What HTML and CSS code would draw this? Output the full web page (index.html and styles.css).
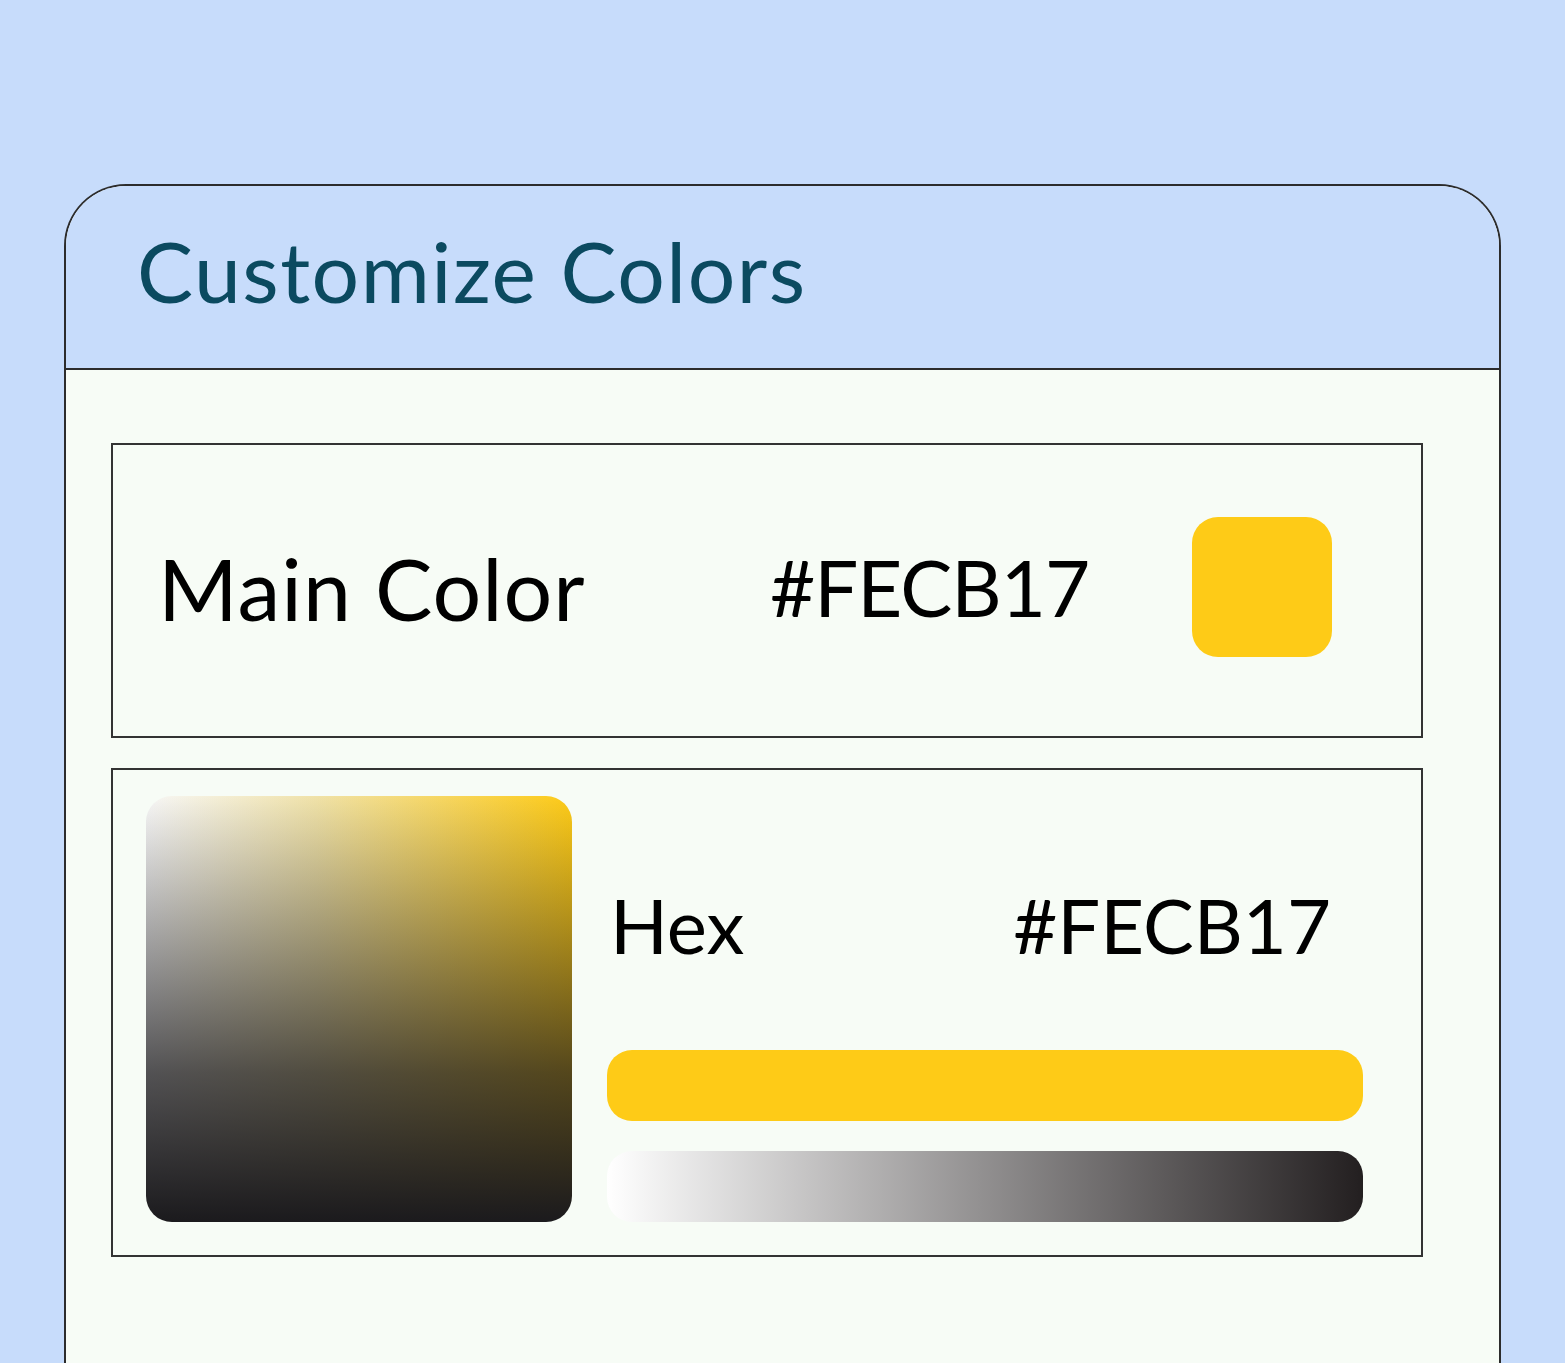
FILE: index.html
```html
<!DOCTYPE html>
<html>
<head>
<meta charset="utf-8">
<title>Customize Colors</title>
<link rel="stylesheet" href="styles.css">
</head>
<body>
<div class="page">
  <section class="card">
    <header class="card-head">
      <h1 class="title">Customize Colors</h1>
    </header>
    <div class="card-body">
      <div class="box main-row">
        <span class="label">Main Color</span>
        <span class="hex">#FECB17</span>
        <span class="swatch"></span>
      </div>
      <div class="box picker">
        <div class="sv-square"></div>
        <div class="picker-side">
          <div class="hex-row">
            <span class="hex-label">Hex</span>
            <span class="hex-value">#FECB17</span>
          </div>
          <div class="bar bar-color"></div>
          <div class="bar bar-gray"></div>
        </div>
      </div>
    </div>
  </section>
</div>
</body>
</html>
```

FILE: styles.css
```css
html, body {
  margin: 0;
  padding: 0;
  background: #c7dcfb;
  height: 1363px;
  overflow: hidden;
}

.page {
  padding: 184px 0 0 64px;
  font-family: Lato, "Noto Sans", sans-serif;
  color: #000;
}

.card {
  width: 1433px;
  height: 1179px;
  border: 2px solid #2c2c2c;
  border-bottom: none;
  border-radius: 62px 62px 0 0;
  overflow: hidden;
  background: #f7fcf6;
}

.card-head {
  height: 182px;
  background: #c7dcfb;
  border-bottom: 2px solid #2c2c2c;
  display: flex;
  align-items: center;
  padding-left: 71px;
}

.title {
  margin: 0;
  font-weight: 400;
  font-size: 84px;
  letter-spacing: 1.5px;
  color: #0b4a60;
  line-height: 1;
  position: relative;
  top: -6px;
}

.card-body {
  padding: 73px 0 0 45px;
  display: flex;
  flex-direction: column;
  gap: 30px;
}

.box {
  width: 1308px;
  border: 2px solid #333;
  box-sizing: content-box;
}

.main-row {
  height: 291px;
  display: flex;
  align-items: center;
}

.label {
  width: 612px;
  padding-left: 45px;
  font-size: 86px;
  letter-spacing: 1px;
  line-height: 1;
  margin-top: -6px;
}

.hex {
  width: 422px;
  font-size: 78px;
  letter-spacing: -1px;
  line-height: 1;
  margin-top: -8px;
}

.swatch {
  width: 140px;
  height: 140px;
  border-radius: 26px;
  background: #fecb17;
  margin-top: -8px;
}

.picker {
  height: 485px;
  display: flex;
  gap: 35px;
}

.sv-square {
  margin: 26px 0 0 33px;
  width: 426px;
  height: 426px;
  border-radius: 26px;
  background:
    linear-gradient(to top, #1b1a1d 0%, rgba(27, 26, 29, 0.75) 35%, rgba(27, 26, 29, 0) 100%),
    linear-gradient(to right, #f7f7f7 0%, #f0e2a8 40%, #fecb17 100%);
}

.picker-side {
  width: 756px;
  display: flex;
  flex-direction: column;
}

.hex-row {
  display: flex;
  justify-content: space-between;
  align-items: center;
  height: 150px;
  margin-top: 80px;
  padding: 0 32px 0 3px;
}

.hex-label,
.hex-value {
  font-size: 76px;
  line-height: 1;
}

.hex-label {
  letter-spacing: 0;
}

.hex-value {
  letter-spacing: 0;
}

.bar {
  height: 71px;
  border-radius: 25px;
}

.bar-color {
  margin-top: 50px;
  background: #fecb17;
}

.bar-gray {
  margin-top: 30px;
  background: linear-gradient(to right, #ffffff 0%, #231f20 100%);
}
```
